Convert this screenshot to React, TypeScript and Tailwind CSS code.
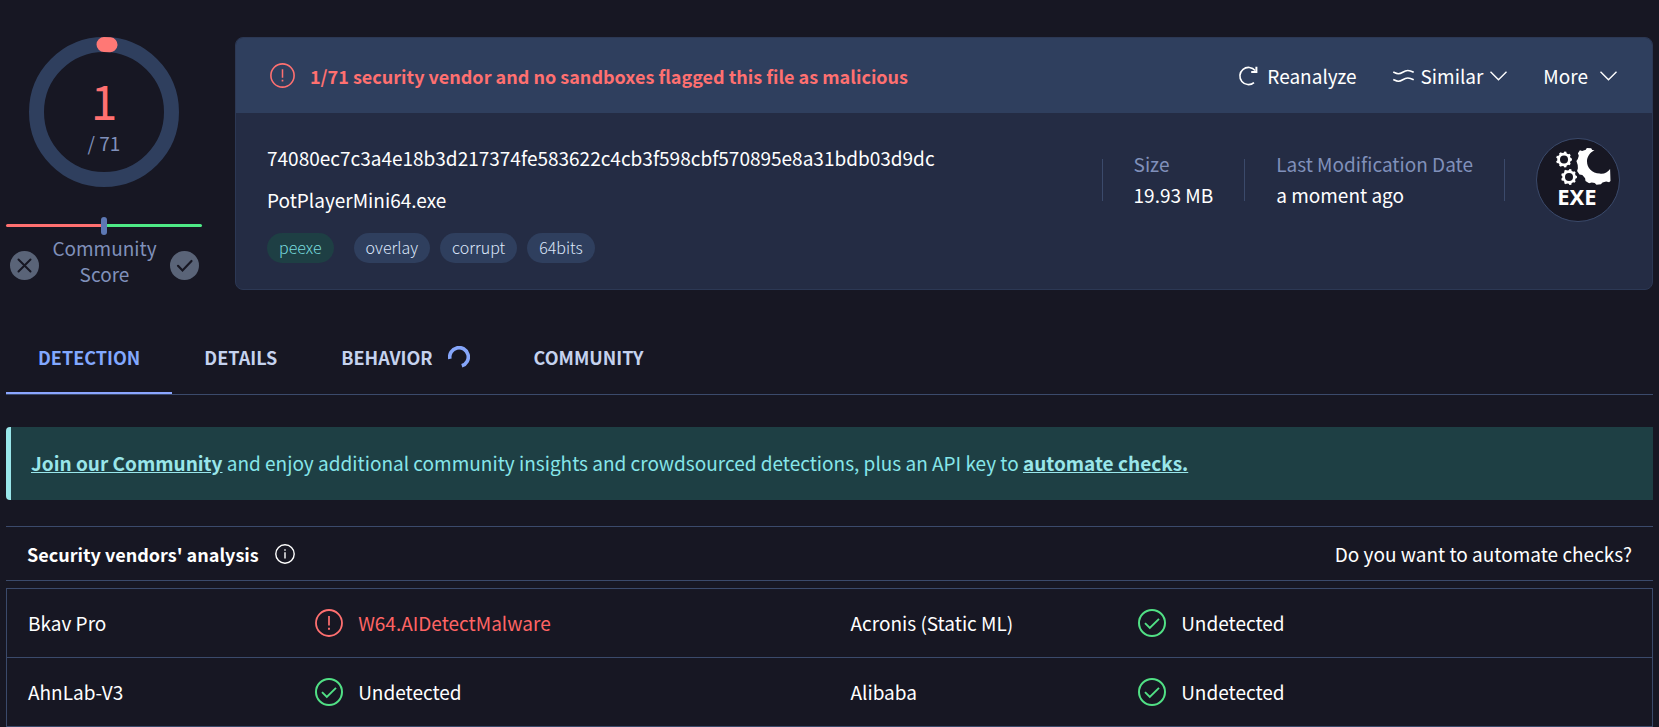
import type { ReactNode } from "react";

type Verdict = { vendor: string; result: string; malicious?: boolean };

const verdictRows: [Verdict, Verdict][] = [
  [
    { vendor: "Bkav Pro", result: "W64.AIDetectMalware", malicious: true },
    { vendor: "Acronis (Static ML)", result: "Undetected" },
  ],
  [
    { vendor: "AhnLab-V3", result: "Undetected" },
    { vendor: "Alibaba", result: "Undetected" },
  ],
];

const tags = ["overlay", "corrupt", "64bits"];

function AlertIcon({ className }: { className: string }) {
  return (
    <svg viewBox="0 0 28 28" className={className} fill="none" stroke="currentColor" aria-hidden="true">
      <circle cx="14" cy="14" r="13" strokeWidth="1.8" />
      <path d="M14 7v9.5" strokeWidth="1.7" />
      <path d="M14 18.8v2" strokeWidth="1.9" />
    </svg>
  );
}

function CheckIcon({ className }: { className: string }) {
  return (
    <svg viewBox="0 0 28 28" className={className} fill="none" stroke="currentColor" aria-hidden="true">
      <circle cx="14" cy="14" r="13" strokeWidth="2" />
      <path d="M7 14.2l4.8 4.8L21 9.8" strokeWidth="1.9" />
    </svg>
  );
}

function Chevron() {
  return (
    <svg viewBox="0 0 17 10" className="h-[10px] w-[17px]" fill="none" stroke="currentColor" strokeWidth="1.4" aria-hidden="true">
      <path d="M.5.8l8 8 8-8" />
    </svg>
  );
}

function ScoreRing() {
  return (
    <div className="relative flex size-[150px] flex-col items-center justify-center gap-[5px]">
      <svg viewBox="0 0 150 150" className="absolute inset-0" fill="none" aria-hidden="true">
        <circle cx="75" cy="75" r="67.5" stroke="#2f3f5e" strokeWidth="15" />
        <path d="M75 7.5A67.5 67.5 0 0 1 81 7.8" stroke="#ff7875" strokeWidth="15" strokeLinecap="round" />
      </svg>
      <div className="relative text-[48px] leading-[56px] text-[#ff7070]">1</div>
      <div className="relative text-[19px] leading-[22px] text-[#8090ba]">/ 71</div>
    </div>
  );
}

function gear(cx: number, cy: number, outer: number, inner: number, teeth: number) {
  const points: string[] = [];
  for (let i = 0; i < teeth; i++) {
    for (const [offset, radius] of [[-0.3, inner], [-0.18, outer], [0.18, outer], [0.3, inner]]) {
      const a = ((i + offset) / teeth) * Math.PI * 2;
      points.push(`${(cx + Math.cos(a) * radius).toFixed(2)},${(cy + Math.sin(a) * radius).toFixed(2)}`);
    }
  }
  return points.join(" ");
}

function ExeBadge() {
  return (
    <svg viewBox="0 0 84 84" className="size-[84px] shrink-0" role="img" aria-label="EXE">
      <circle cx="42" cy="42" r="41.5" fill="#171723" stroke="#3b4a6b" />
      <polygon points={gear(28, 21.5, 8, 6.8, 9)} fill="#fff" />
      <circle cx="28" cy="21.5" r="4" fill="#171723" />
      <polygon points={gear(33, 39, 8, 6.8, 9)} fill="#fff" />
      <circle cx="33" cy="39" r="4" fill="#171723" />
      <path
        d="M58.5 12.2l-2.3-.2-1-1.7-4.4-.4-1 1.8-3.7 1.2-2.2-.6-2 3 .9 2.4-1 3.4-1.4 2 1.3 3.8.2 3.4-.8 2.6 2.4 3.6 2.8.6 2.8 3.2.4 2.6 3.6 2.4 2.6-.8 3 .6 1.8 1.6 4.4-.4 1.6-1.8 3.6-1 3 .8 1.4-1.2-.4-12.2c-2.6 3.6-6.4 5.4-10.4 4.6C56 35.2 51 30 51 23.2c0-4.400 2.800-8.600 7.500-11z"
        fill="#fff"
      />
      <text x="41" y="67" textAnchor="middle" fontSize="22" fontWeight="700" fill="#fff" fontFamily="Noto Sans, Open Sans, sans-serif">
        EXE
      </text>
    </svg>
  );
}

function Stat({ label, children }: { label: string; children: ReactNode }) {
  return (
    <div className="pb-0.5 leading-[31px]">
      <dt className="text-[#8090ba]">{label}</dt>
      <dd>{children}</dd>
    </div>
  );
}

function Divider() {
  return <div className="h-[42px] w-px bg-[#3b4a6b]" />;
}

function VerdictCells({ vendor, result, malicious }: Verdict) {
  return (
    <>
      <th scope="row" className="pl-[21px] text-left font-normal">{vendor}</th>
      <td>
        <div className={malicious ? "flex items-center gap-[15px] text-[#ff6464]" : "flex items-center gap-[15px]"}>
          {malicious ? (
            <AlertIcon className="size-7 text-[#ff7070]" />
          ) : (
            <CheckIcon className="size-7 text-[#51e085]" />
          )}
          {result}
        </div>
      </td>
    </>
  );
}

export default function App() {
  return (
    <div className="min-h-screen overflow-hidden bg-[#171723] px-[6px] pt-[37px] font-['Noto_Sans_CJK_SC','Noto_Sans',sans-serif] text-[19px] leading-6 text-white">
      <section className="flex gap-[33px]">
        <aside className="flex w-[196px] shrink-0 flex-col items-center">
          <ScoreRing />
          <div className="relative mt-[37px] flex h-[3px] w-full">
            <div className="flex-1 rounded-l bg-[#ff7070]" />
            <div className="flex-1 rounded-r bg-[#4eea86]" />
            <div className="absolute -top-[7px] left-1/2 h-[18px] w-[6px] -translate-x-1/2 rounded-full bg-[#5d78b4]" />
          </div>
          <div className="flex w-full items-start justify-between pt-2 pr-[3px] pl-1">
            <button type="button" aria-label="Vote malicious" className="mt-4">
              <svg viewBox="0 0 29 29" className="size-[29px]" fill="none" aria-hidden="true">
                <circle cx="14.5" cy="14.5" r="14.5" fill="#5a6478" />
                <path d="M8.5 8.5l12 12M20.5 8.5l-12 12" stroke="#171723" strokeWidth="2" strokeLinecap="round" />
              </svg>
            </button>
            <p className="w-[110px] text-center leading-[26px] text-[#8090ba]">Community Score</p>
            <button type="button" aria-label="Vote harmless" className="mt-4">
              <svg viewBox="0 0 29 29" className="size-[29px]" fill="none" aria-hidden="true">
                <circle cx="14.5" cy="14.5" r="14.5" fill="#5a6478" />
                <path d="M8 14.8l4.5 4.7L21.5 10" stroke="#171723" strokeWidth="2.2" strokeLinecap="round" />
              </svg>
            </button>
          </div>
        </aside>

        <article className="h-[253px] flex-1 overflow-hidden rounded-lg border border-[#2c3854] bg-[#242c44]">
          <header className="flex h-[75px] items-center justify-between bg-[#2f3f5e] pr-[35px] pl-[34px]">
            <div className="flex items-center gap-[15px] text-[18px] font-bold text-[#ff7070]">
              <AlertIcon className="size-[25px]" />
              1/71 security vendor and no sandboxes flagged this file as malicious
            </div>
            <div className="flex items-center gap-9">
              <button type="button" className="flex items-center gap-[9px]">
                <svg viewBox="0 0 20 20" className="size-5" fill="none" stroke="currentColor" strokeWidth="1.6" aria-hidden="true">
                  <path d="M17.2 4.6A8.6 8.6 0 1 0 16 16.6" />
                  <path d="M18.4.8v5.200h-5.200" strokeWidth="2" />
                </svg>
                Reanalyze
              </button>
              <button type="button" className="flex items-center gap-[7px]">
                <svg viewBox="0 0 21 14" className="h-[14px] w-[21px]" fill="none" stroke="currentColor" strokeWidth="1.6" aria-hidden="true">
                  <path d="M.3 3c2 1 3 1.800 5 1.800 4 0 5-3.300 9.500-3.300 2.500 0 4 .8 5.900 1.800" />
                  <path d="M.3 10.500c2 1 3 1.800 5 1.800 4 0 5-3.300 9.500-3.300 2.500 0 4 .8 5.900 1.800" />
                </svg>
                Similar
                <Chevron />
              </button>
              <button type="button" className="flex items-center gap-3">
                More
                <Chevron />
              </button>
            </div>
          </header>
          <div className="flex justify-between pr-8 pl-[31px]">
            <div className="pt-[33px]">
              <div>74080ec7c3a4e18b3d217374fe583622c4cb3f598cbf570895e8a31bdb03d9dc</div>
              <div className="mt-[18px]">PotPlayerMini64.exe</div>
              <div className="mt-[21px] flex gap-[10px] text-[16px] leading-7 font-light text-[#dce6fa]">
                <a href="#peexe" className="mr-[10px] rounded-full bg-[#1e3f44] px-3 pb-0.5 text-[#78dcdf]">peexe</a>
                {tags.map((tag) => (
                  <a key={tag} href={`#${tag}`} className="rounded-full bg-[#2f3f5e] px-3 pb-0.5">{tag}</a>
                ))}
              </div>
            </div>
            <dl className="flex items-center gap-[31px] self-start pt-[25px]">
              <Divider />
              <Stat label="Size">19.93 MB</Stat>
              <Divider />
              <Stat label="Last Modification Date">a moment ago</Stat>
              <Divider />
              <ExeBadge />
            </dl>
          </div>
        </article>
      </section>

      <nav className="mt-8 flex h-[73px] border-b border-[#3b4a6b] text-[18px] font-bold text-[#c5d2ee]">
        <a href="#detection" className="flex items-center border-b-2 border-[#8ba6ff] px-8 text-[#82a8ff]">DETECTION</a>
        <a href="#details" className="flex items-center border-b-2 border-transparent px-8">DETAILS</a>
        <a href="#behavior" className="flex items-center gap-[15px] border-b-2 border-transparent px-8">
          BEHAVIOR
          <svg viewBox="0 0 22 22" className="size-[22px]" fill="none" aria-hidden="true">
            <path d="M1.9 12.8A9.3 9.3 0 1 1 13.8 19.8" stroke="#86a6fa" strokeWidth="3.6" />
          </svg>
        </a>
        <a href="#community" className="flex items-center border-b-2 border-transparent px-8">COMMUNITY</a>
      </nav>

      <p className="mt-8 rounded-l border-l-[5px] border-[#99e6ea] bg-[#1e3f44] px-5 pt-6 pb-[25px] text-[#86e6ea]">
        <a href="#join" className="font-bold text-[#99e6ea] underline">Join our Community</a> and enjoy additional community insights and
        crowdsourced detections, plus an API key to <a href="#automate" className="font-bold text-[#99e6ea] underline">automate checks.</a>
      </p>

      <section className="mt-[26px]">
        <header className="flex h-[55px] items-center justify-between border-y border-[#3b4a6b] px-[21px]">
          <h2 className="flex items-center gap-4 text-[18px] font-bold">
            Security vendors' analysis
            <svg viewBox="0 0 20 20" className="size-5" fill="none" stroke="currentColor" aria-hidden="true">
              <circle cx="10" cy="10" r="9.2" strokeWidth="1.4" />
              <path d="M10 8.2v6.3M10 5.3v1.5" strokeWidth="1.4" />
            </svg>
          </h2>
          <a href="#automate">Do you want to automate checks?</a>
        </header>
        <table className="mt-[7px] w-full table-fixed border-collapse border border-[#3b4a6b]">
          <colgroup>
            <col className="w-[18.75%]" />
            <col className="w-[31.25%]" />
            <col className="w-[18.75%]" />
            <col className="w-[31.25%]" />
          </colgroup>
          <tbody>
            {verdictRows.map(([left, right]) => (
              <tr key={left.vendor} className="h-[69px] border-b border-[#3b4a6b]">
                <VerdictCells {...left} />
                <VerdictCells {...right} />
              </tr>
            ))}
          </tbody>
        </table>
      </section>
    </div>
  );
}
